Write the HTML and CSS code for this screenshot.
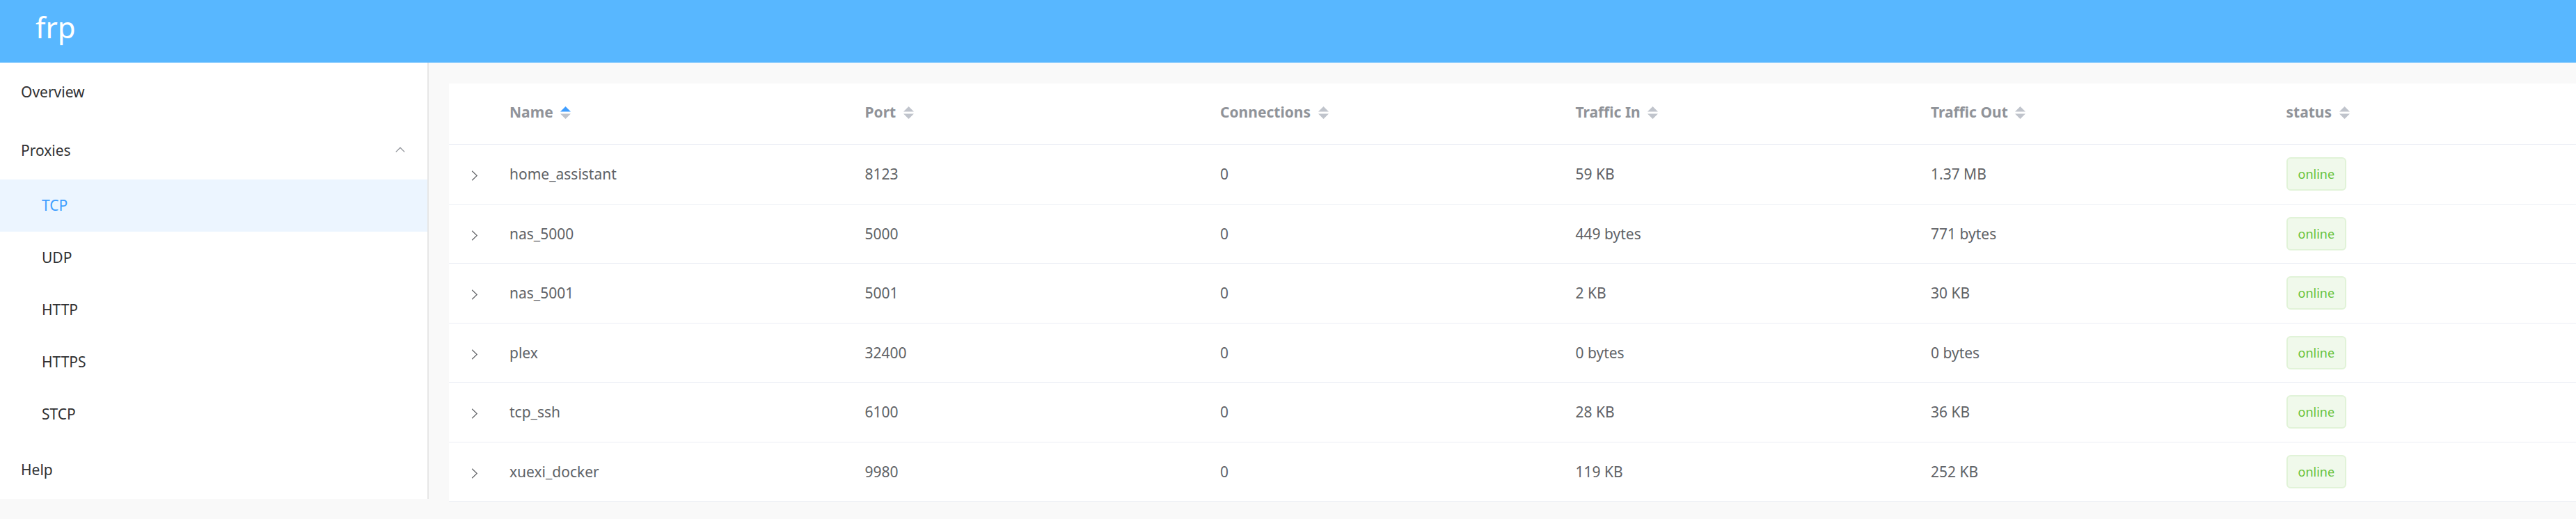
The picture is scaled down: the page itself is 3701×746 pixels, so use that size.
FILE: index.html
```html
<!DOCTYPE html>
<html lang="en">
<head>
<meta charset="utf-8">
<title>frp</title>
<link rel="stylesheet" href="styles.css">
</head>
<body>
<header class="topbar"><span class="brand">frp</span></header>
<div class="layout">
  <nav class="sidebar">
    <div class="menu-item">Overview</div>
    <div class="menu-item submenu-title">
      <span>Proxies</span>
      <svg class="up-arrow" width="14" height="8" viewBox="0 0 14 8"><polyline points="0.8,7.4 7,1.2 13.2,7.4" fill="none" stroke="#909399" stroke-width="1.3"/></svg>
    </div>
    <div class="sub-item active">TCP</div>
    <div class="sub-item">UDP</div>
    <div class="sub-item">HTTP</div>
    <div class="sub-item">HTTPS</div>
    <div class="sub-item">STCP</div>
    <div class="menu-item">Help</div>
  </nav>
  <main class="main">
    <table class="proxy-table">
      <colgroup>
        <col class="col-expand"><col class="col-data"><col class="col-data"><col class="col-data"><col class="col-data"><col class="col-data"><col class="col-data">
      </colgroup>
      <thead>
        <tr>
          <th></th>
          <th><div class="th-inner">Name<svg class="caret" width="15" height="18" viewBox="0 0 15 18"><polygon points="0,7.5 7.5,0 15,7.5" fill="#409eff"/><polygon points="0,10.5 15,10.5 7.5,18" fill="#c0c4cc"/></svg></div></th>
          <th><div class="th-inner">Port<svg class="caret" width="15" height="18" viewBox="0 0 15 18"><polygon points="0,7.5 7.5,0 15,7.5" fill="#c0c4cc"/><polygon points="0,10.5 15,10.5 7.5,18" fill="#c0c4cc"/></svg></div></th>
          <th><div class="th-inner">Connections<svg class="caret" width="15" height="18" viewBox="0 0 15 18"><polygon points="0,7.5 7.5,0 15,7.5" fill="#c0c4cc"/><polygon points="0,10.5 15,10.5 7.5,18" fill="#c0c4cc"/></svg></div></th>
          <th><div class="th-inner">Traffic In<svg class="caret" width="15" height="18" viewBox="0 0 15 18"><polygon points="0,7.5 7.5,0 15,7.5" fill="#c0c4cc"/><polygon points="0,10.5 15,10.5 7.5,18" fill="#c0c4cc"/></svg></div></th>
          <th><div class="th-inner">Traffic Out<svg class="caret" width="15" height="18" viewBox="0 0 15 18"><polygon points="0,7.5 7.5,0 15,7.5" fill="#c0c4cc"/><polygon points="0,10.5 15,10.5 7.5,18" fill="#c0c4cc"/></svg></div></th>
          <th><div class="th-inner">status<svg class="caret" width="15" height="18" viewBox="0 0 15 18"><polygon points="0,7.5 7.5,0 15,7.5" fill="#c0c4cc"/><polygon points="0,10.5 15,10.5 7.5,18" fill="#c0c4cc"/></svg></div></th>
        </tr>
      </thead>
      <tbody>
        <tr>
          <td class="expand"><svg width="10" height="15" viewBox="0 0 10 15"><polyline points="1.2,0.8 8.2,7.5 1.2,14.2" fill="none" stroke="#606266" stroke-width="1.2"/></svg></td>
          <td>home_assistant</td><td>8123</td><td>0</td><td>59 KB</td><td>1.37 MB</td><td><span class="tag">online</span></td>
        </tr>
        <tr>
          <td class="expand"><svg width="10" height="15" viewBox="0 0 10 15"><polyline points="1.2,0.8 8.2,7.5 1.2,14.2" fill="none" stroke="#606266" stroke-width="1.2"/></svg></td>
          <td>nas_5000</td><td>5000</td><td>0</td><td>449 bytes</td><td>771 bytes</td><td><span class="tag">online</span></td>
        </tr>
        <tr>
          <td class="expand"><svg width="10" height="15" viewBox="0 0 10 15"><polyline points="1.2,0.8 8.2,7.5 1.2,14.2" fill="none" stroke="#606266" stroke-width="1.2"/></svg></td>
          <td>nas_5001</td><td>5001</td><td>0</td><td>2 KB</td><td>30 KB</td><td><span class="tag">online</span></td>
        </tr>
        <tr>
          <td class="expand"><svg width="10" height="15" viewBox="0 0 10 15"><polyline points="1.2,0.8 8.2,7.5 1.2,14.2" fill="none" stroke="#606266" stroke-width="1.2"/></svg></td>
          <td>plex</td><td>32400</td><td>0</td><td>0 bytes</td><td>0 bytes</td><td><span class="tag">online</span></td>
        </tr>
        <tr>
          <td class="expand"><svg width="10" height="15" viewBox="0 0 10 15"><polyline points="1.2,0.8 8.2,7.5 1.2,14.2" fill="none" stroke="#606266" stroke-width="1.2"/></svg></td>
          <td>tcp_ssh</td><td>6100</td><td>0</td><td>28 KB</td><td>36 KB</td><td><span class="tag">online</span></td>
        </tr>
        <tr>
          <td class="expand"><svg width="10" height="15" viewBox="0 0 10 15"><polyline points="1.2,0.8 8.2,7.5 1.2,14.2" fill="none" stroke="#606266" stroke-width="1.2"/></svg></td>
          <td>xuexi_docker</td><td>9980</td><td>0</td><td>119 KB</td><td>252 KB</td><td><span class="tag">online</span></td>
        </tr>
      </tbody>
    </table>
  </main>
</div>
</body>
</html>
```
FILE: styles.css
```css
html, body {
  margin: 0;
  padding: 0;
}
body {
  background: #f9f9f9;
  font-family: "Noto Sans", "Liberation Sans", sans-serif;
  overflow: hidden;
  width: 3701px;
  height: 746px;
}
.topbar {
  height: 90px;
  background: #58b7ff;
  box-sizing: border-box;
  padding-left: 51px;
  display: flex;
  align-items: flex-start;
}
.brand {
  color: #ffffff;
  font-size: 42px;
  line-height: 78px;
}
.layout {
  display: flex;
  align-items: flex-start;
}
.sidebar {
  width: 614px;
  flex: none;
  background: #ffffff;
  border-right: 2px solid #e6e6e6;
}
.menu-item {
  height: 84px;
  line-height: 84px;
  padding-left: 30px;
  padding-right: 32px;
  font-size: 21px;
  color: #303133;
  display: flex;
  align-items: center;
  justify-content: space-between;
}
.up-arrow {
  display: block;
  margin-top: -3px;
}
.sub-item {
  height: 75px;
  line-height: 75px;
  padding-left: 60px;
  font-size: 21px;
  color: #303133;
}
.sub-item.active {
  background: #ecf5ff;
  color: #409eff;
}
.main {
  flex: 1;
  min-width: 0;
  padding: 30px 0 0 29px;
  overflow: hidden;
}
.proxy-table {
  table-layout: fixed;
  width: 3135px;
  border-collapse: collapse;
  background: #ffffff;
  font-size: 21px;
  color: #606266;
}
.col-expand {
  width: 72px;
}
.col-data {
  width: 510.5px;
}
.proxy-table th {
  text-align: left;
  font-weight: 700;
  color: #909399;
  padding: 15px 15px 21px 15px;
  border-bottom: 1px solid #ebeef5;
  height: 51px;
}
.th-inner {
  display: flex;
  align-items: center;
  height: 51px;
}
.caret {
  margin-left: 10.5px;
  margin-top: 2px;
  flex: none;
}
.proxy-table td {
  padding: 18px 15px 18.5px 15px;
  height: 48px;
  line-height: 34px;
  border-bottom: 1px solid #ebeef5;
  white-space: nowrap;
  vertical-align: middle;
}
.proxy-table td.expand {
  padding: 0;
  text-align: center;
}
.proxy-table td.expand svg {
  display: inline-block;
  vertical-align: middle;
  margin-left: 2px;
}
.tag {
  display: inline-block;
  box-sizing: border-box;
  height: 48px;
  line-height: 44px;
  padding: 0 15px;
  font-size: 18px;
  color: #67c23a;
  background: #f0f9eb;
  border: 2px solid #e1f3d8;
  border-radius: 6px;
  vertical-align: middle;
}
```
